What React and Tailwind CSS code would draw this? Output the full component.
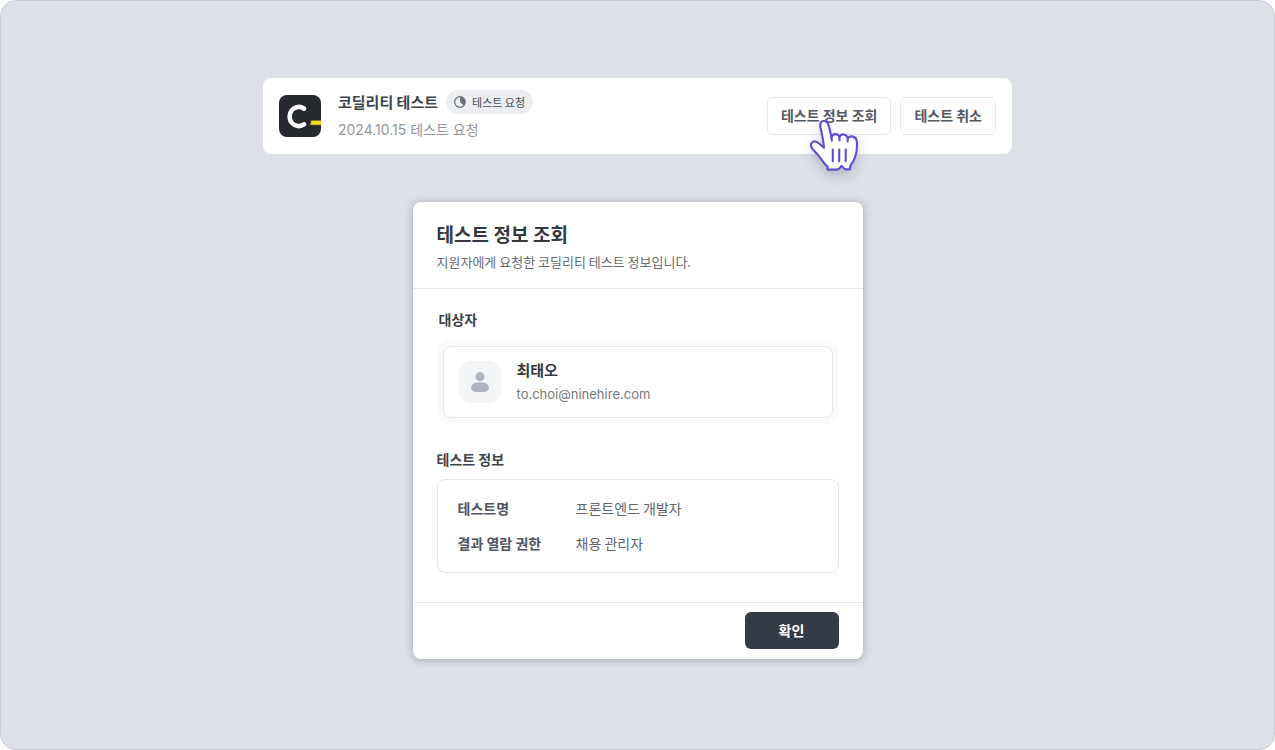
import React from "react";

const TEST_INFO = [
  { label: "테스트명", value: "프론트엔드 개발자" },
  { label: "결과 열람 권한", value: "채용 관리자" },
];

function CodilityLogo() {
  return (
    <svg className="size-[42px] shrink-0" viewBox="0 0 42 42" aria-hidden="true">
      <rect width="42" height="42" rx="8" fill="#26292d" />
      <path
        d="M25 13.6A9.2 9.6 0 1 0 25 29.4"
        fill="none"
        stroke="#fff"
        strokeWidth="4.6"
        strokeLinecap="round"
      />
      <path d="M32.4 25.8H42V29.8H31.6Z" fill="#eedc1f" stroke="#eedc1f" strokeWidth="0.4" />
    </svg>
  );
}

function PendingIcon() {
  return (
    <svg className="size-3 shrink-0" viewBox="0 0 12 12" aria-hidden="true">
      <circle cx="6" cy="6" r="5.3" fill="none" stroke="#6b707b" strokeWidth="1.2" />
      <path d="M6 1V6L9.6 9.6A5 5 0 0 0 6 1Z" fill="#6b707b" />
    </svg>
  );
}

function PersonIcon() {
  return (
    <svg className="h-5 w-[18px]" viewBox="0 0 18 20" aria-hidden="true">
      <circle cx="9" cy="4.7" r="4.6" fill="#b0b4c1" />
      <path
        d="M9 10.2C13.8 10.2 17.9 12 17.9 15.4C17.9 18.6 15.6 20 12.8 20H5.2C2.4 20 .1 18.6 .1 15.4C.1 12 4.2 10.2 9 10.2Z"
        fill="#b0b4c1"
      />
    </svg>
  );
}

// Pointer that hovers over the "view test info" button
function HandCursor() {
  return (
    <svg
      className="pointer-events-none absolute top-[22px] left-[42px] h-[52px] w-[50px] drop-shadow-[0_5px_6px_rgba(60,60,90,0.25)]"
      viewBox="0 0 50 52"
      aria-hidden="true"
    >
      <g stroke="#5f4dd3" strokeWidth="2.1" strokeLinejoin="round" strokeLinecap="round">
        <path
          d="M18.6 50.6V47.8C16 45.4 13.8 42.6 11.8 39.6C9.6 36.2 7.2 33.8 4.6 31.2C1.8 28.4 1.4 25.4 3 23.6C4.8 21.6 7.6 22.3 9.8 24.3L15 28.8C14.6 22 12.8 14 11.4 8C10.6 4.8 11.8 2.6 14 2.1C16.4 1.6 18.4 3 19.4 5.6C20.8 9.8 21.4 14 22.4 18.4C23.6 14.4 28.8 13.8 30.4 18C32.2 14.2 37.4 14.6 38.8 19.2C41.6 16 46.8 17.4 47.7 21.6C48.4 27 48 32 46.4 37C45.4 40.6 44 43.4 42 45.4C41.2 46.8 40.8 48.2 40.8 50.4H37C35 50.2 34 48.6 32.6 46.8C31.2 48.8 29.8 50.6 27.6 50.6Z"
          fill="#fff"
        />
        <path d="M22.4 18.4L22.8 21.6M30.4 18L30.6 21.4M38.8 19.2L38.6 22.4" fill="none" />
        <path d="M23.8 30.6V42.2M30.2 30.6V42.2M36.7 30.6V42.2" fill="none" />
      </g>
    </svg>
  );
}

function OutlineButton({ children }) {
  return (
    <button
      type="button"
      className="h-[38px] rounded-md border border-[#e7e9ed] bg-white px-[13px] pb-0.5 text-sm font-bold text-[#555962]"
    >
      {children}
    </button>
  );
}

function RequestBar() {
  return (
    <section className="flex w-full max-w-[749px] items-center gap-[17px] rounded-lg bg-white px-4 py-3">
      <CodilityLogo />
      <div className="flex flex-1 flex-col gap-1">
        <div className="flex items-center gap-2">
          <h2 className="text-[15px] leading-6 font-bold text-[#3f434c]">코딜리티 테스트</h2>
          <span className="flex h-6 items-center gap-1.5 rounded-full bg-[#eceef2] px-2 text-[11px] text-[#484c55]">
            <PendingIcon />
            테스트 요청
          </span>
        </div>
        <p className="font-['Inter','Noto_Sans_CJK_KR',sans-serif] text-sm leading-6 text-[#94979d]">
          2024.10.15 테스트 요청
        </p>
      </div>
      <div className="flex gap-[9px]">
        <div className="relative">
          <OutlineButton>테스트 정보 조회</OutlineButton>
          <HandCursor />
        </div>
        <OutlineButton>테스트 취소</OutlineButton>
      </div>
    </section>
  );
}

function TestInfoModal() {
  return (
    <div
      role="dialog"
      aria-labelledby="modal-title"
      className="w-full max-w-[450px] rounded-lg bg-white shadow-[0_1px_8px_rgba(70,75,85,0.4)]"
    >
      <header className="border-b border-[#e8e9ec] px-6 pt-5 pb-4">
        <h1
          id="modal-title"
          className="font-['Inter','Noto_Sans_CJK_KR',sans-serif] text-[19px] leading-7 font-bold text-[#34383f]"
        >
          테스트 정보 조회
        </h1>
        <p className="mt-0.5 text-[13px] leading-5 text-[#666a72]">
          지원자에게 요청한 코딜리티 테스트 정보입니다.
        </p>
      </header>

      <div className="px-6 pt-5 pb-[29px]">
        <h3 className="px-0.5 text-sm leading-5 font-bold text-[#3f434c]">대상자</h3>
        <div className="mt-[11px] rounded-xl bg-[#f9fafb] p-1.5">
          <div className="flex items-center gap-4 rounded-lg border border-[#e4e6ea] bg-white px-[15px] py-[11px]">
            <span className="flex size-[42px] items-center justify-center rounded-xl bg-[#f3f5f7]">
              <PersonIcon />
            </span>
            <div>
              <p className="text-[15px] leading-6 font-bold text-[#34383f]">최태오</p>
              <p className="font-['Inter',sans-serif] text-[13px] leading-6 text-[#777a80]">
                to.choi@ninehire.com
              </p>
            </div>
          </div>
        </div>

        <h3 className="mt-[25px] text-sm leading-5 font-bold text-[#3f434c]">테스트 정보</h3>
        <dl className="mt-2.5 flex flex-col gap-[15px] rounded-lg border border-[#e4e6ea] px-5 pt-[18px] pb-[19px]">
          {TEST_INFO.map((item) => (
            <div key={item.label} className="flex text-sm leading-5">
              <dt className="w-[118px] shrink-0 font-bold text-[#50545e]">{item.label}</dt>
              <dd className="text-[#62656e]">{item.value}</dd>
            </div>
          ))}
        </dl>
      </div>

      <footer className="flex justify-end border-t border-[#e4e6ea] px-6 pt-[9px] pb-2.5">
        <button
          type="button"
          className="h-[37px] w-[94px] rounded-md bg-[#343b46] pb-0.5 text-sm font-bold text-white"
        >
          확인
        </button>
      </footer>
    </div>
  );
}

export default function App() {
  return (
    <div className="min-h-screen bg-white font-['Noto_Sans_CJK_KR',sans-serif]">
      <main className="flex min-h-screen flex-col items-center gap-12 rounded-2xl border border-[#c9cdd3] bg-[#dde0e7] px-6 pt-[77px] pb-12">
        <RequestBar />
        <TestInfoModal />
      </main>
    </div>
  );
}
